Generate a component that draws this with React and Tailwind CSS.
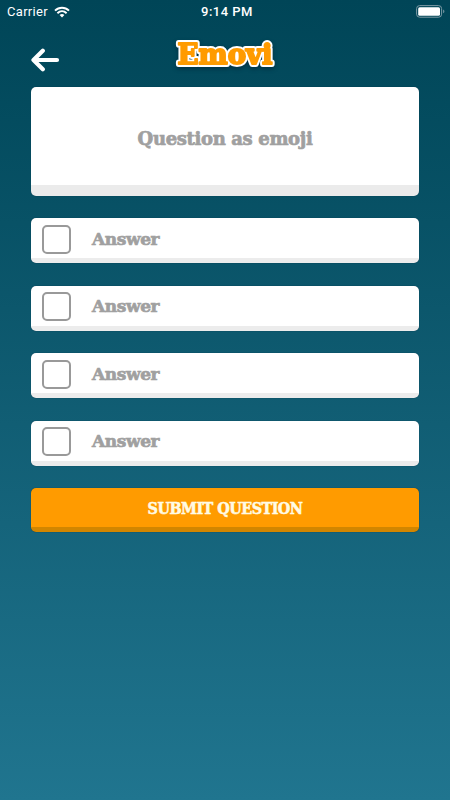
import { useState } from "react";

const SLAB = "font-['DejaVu_Serif','Liberation_Serif',serif] font-bold";

function StatusBar() {
  return (
    <div className="grid h-[23px] grid-cols-3 items-center pl-[7px] pr-[5px] font-['Roboto','Inter',sans-serif] text-white">
      <div className="flex items-center gap-[6px]">
        <span className="text-[13px] leading-none tracking-[0.3px]">Carrier</span>
        <svg width="16" height="12" viewBox="0 0 16 12" fill="none" stroke="currentColor" strokeWidth="1.9">
          <path d="M1 4.6C5 .7 11 .7 15 4.6" />
          <path d="M3.4 7.2c2.7-2.6 6.5-2.6 9.2 0" />
          <path d="M8 11.4 5.6 9c1.4-1.2 3.4-1.2 4.8 0z" fill="currentColor" stroke="none" />
        </svg>
      </div>
      <span className="pl-[2px] text-center text-[13px] font-medium leading-none tracking-[0.5px]">9:14 PM</span>
      <svg className="justify-self-end" width="29" height="13" viewBox="0 0 29 13" fill="none">
        <rect x=".6" y=".6" width="25" height="11.6" rx="3" stroke="#7d9ba6" strokeWidth="1" />
        <rect x="2.2" y="2.2" width="21.8" height="8.6" rx="1.5" fill="#fff" />
        <path d="M27.2 4.5c1.6.7 1.6 3.1 0 3.8z" fill="#7d9ba6" />
      </svg>
    </div>
  );
}

function Header() {
  return (
    <header className="grid h-[64px] grid-cols-3 px-[31px]">
      <button className="mt-[25px] self-start justify-self-start text-white">
        <svg width="29" height="24" viewBox="0 0 29 24" fill="none" stroke="currentColor" strokeWidth="4.2" strokeLinecap="round" strokeLinejoin="round">
          <path d="M11.8 2.7 2.5 12l9.3 9.3" />
          <path d="M4 12h22" />
        </svg>
      </button>
      {/* white outline around slightly fattened orange letters */}
      <svg
        className="mt-[10px] justify-self-center overflow-visible font-['DejaVu_Serif',serif] text-[28px] font-bold drop-shadow-[0_2px_2px_rgba(0,20,40,0.45)]"
        width="104"
        height="40"
        viewBox="0 0 104 40"
        strokeLinejoin="round"
      >
        <text x="4.5" y="30.5" textLength="95" lengthAdjust="spacingAndGlyphs" fill="#fff" stroke="#fff" strokeWidth="5.8" aria-hidden="true">
          Emovi
        </text>
        <text x="4.5" y="30.5" textLength="95" lengthAdjust="spacingAndGlyphs" fill="#ff9b00" stroke="#ff9b00" strokeWidth="2">
          Emovi
        </text>
      </svg>
    </header>
  );
}

function Answer({ checked, onToggle }) {
  return (
    <div className="flex h-[45px] items-center rounded-[5px] border-b-[5px] border-[#ececec] bg-white pl-[11px] shadow-[0_0_1px_#002b40]">
      <button
        onClick={onToggle}
        className={`mt-[2px] size-[29px] rounded-[5px] border-2 border-[#999] ${checked ? "bg-[#ff9b00]" : "bg-white"}`}
      />
      <span className={`${SLAB} ml-[21px] mt-[2px] text-[17px] leading-none tracking-[-0.4px] text-[#a0a0a0] [-webkit-text-stroke:0.7px_#a0a0a0]`}>Answer</span>
    </div>
  );
}

export default function App() {
  const [selected, setSelected] = useState(null);

  return (
    <div className="h-screen overflow-hidden bg-linear-to-b from-[#004557] to-[#20758f]">
      <StatusBar />
      <Header />
      <main className="flex flex-col gap-[22.4px] px-[31px]">
        <div className="flex h-[109px] items-center justify-center rounded-[5px] border-b-[11px] border-[#ebebeb] bg-white shadow-[0_0_1px_#002b40]">
          <span className={`${SLAB} mt-[5px] text-[18px] leading-none tracking-[-0.35px] text-[#a0a0a0] [-webkit-text-stroke:0.7px_#a0a0a0]`}>Question as emoji</span>
        </div>
        {[0, 1, 2, 3].map((i) => (
          <Answer key={i} checked={selected === i} onToggle={() => setSelected(selected === i ? null : i)} />
        ))}
        <button
          className="h-[44.5px] rounded-[5px] border-b-[5px] border-[#d28600] bg-[#ff9b00] pt-[3px] font-['DejaVu_Serif_Condensed','DejaVu_Serif',serif] text-[16px] font-bold leading-none tracking-[-0.55px] text-[#fffbe5] shadow-[0_0_1px_#002b40] [font-stretch:condensed] [-webkit-text-stroke:0.5px_#fffbe5]"
        >
          SUBMIT QUESTION
        </button>
      </main>
    </div>
  );
}
